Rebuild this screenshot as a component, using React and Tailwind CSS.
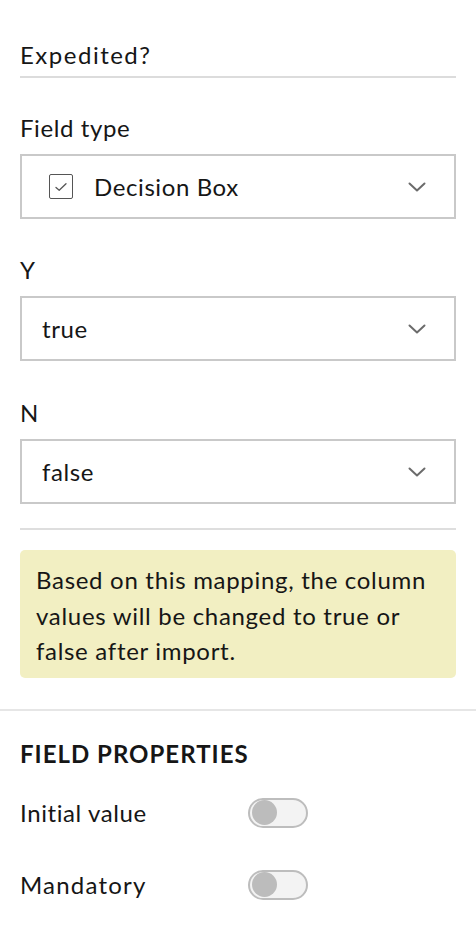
import React from "react";

function Chevron() {
  return (
    <svg width="18" height="10" viewBox="0 0 18 10" fill="none" className="shrink-0">
      <path d="M1.5 1.5 L9 8.5 L16.5 1.5" stroke="#6b6b6b" strokeWidth="2" strokeLinecap="round" strokeLinejoin="round" />
    </svg>
  );
}

function Select({ children }) {
  return (
    <div className="h-[65px] border-2 border-[#c9c9c9] flex items-center pl-[20px] pr-[28px] justify-between">
      <div className="flex items-center">{children}</div>
      <Chevron />
    </div>
  );
}

function Toggle() {
  return (
    <div className="w-[60px] h-[30px] rounded-full border-2 border-[#bdbdbd] bg-[#f3f3f3] flex items-center pl-[2px]">
      <div className="w-[25px] h-[25px] rounded-full bg-[#bcbcbc]" />
    </div>
  );
}

export default function App() {
  return (
    <div
      className="w-[476px] h-[936px] bg-white text-[#161616] overflow-hidden tracking-[0.6px]"
      style={{ fontFamily: "Lato, 'Open Sans', sans-serif" }}
    >
      <div className="px-5 pt-[37px]">
        <div className="text-[24px] leading-[36px] pb-[3px] border-b-2 border-[#dcdcdc] tracking-[1.5px]">Expedited?</div>

        <div className="text-[24px] leading-[30px] mt-[35px] mb-[11px]">Field type</div>
        <Select>
          <div className="w-[24px] h-[25px] border-[1.5px] border-[#555] rounded-[2px] flex items-center justify-center ml-[7px] mr-[21px]">
            <svg width="14" height="10" viewBox="0 0 14 10" fill="none">
              <path d="M2 5.5 L5.2 8.2 L12 1.8" stroke="#555" strokeWidth="1.3" strokeLinecap="round" strokeLinejoin="round" />
            </svg>
          </div>
          <span className="text-[24px]">Decision Box</span>
        </Select>

        <div className="text-[24px] leading-[30px] mt-[36px] mb-[11px]">Y</div>
        <Select>
          <span className="text-[24px]">true</span>
        </Select>

        <div className="text-[24px] leading-[30px] mt-[37px] mb-[11px]">N</div>
        <Select>
          <span className="text-[24px]">false</span>
        </Select>

        <div className="mt-[24px] border-t-2 border-[#dedede]" />

        <div className="mt-[20px] bg-[#f2efc2] rounded-[5px] px-[16px] pt-[12px] pb-[9px] text-[24px] leading-[35.5px] tracking-[0.7px]">
          Based on this mapping, the column<br />values will be changed to true or<br />false after import.
        </div>
      </div>

      <div className="mt-[31px] border-t-2 border-[#e6e6e6] px-5 pt-[28px]">
        <div className="text-[24px] font-bold leading-[30px] tracking-[1px]">FIELD PROPERTIES</div>
        <div className="flex items-center mt-[27px] h-[34px]">
          <span className="text-[24px] w-[228px]">Initial value</span>
          <Toggle />
        </div>
        <div className="flex items-center mt-[38px] h-[34px]">
          <span className="text-[24px] w-[228px] tracking-[1.2px]">Mandatory</span>
          <Toggle />
        </div>
      </div>
    </div>
  );
}
